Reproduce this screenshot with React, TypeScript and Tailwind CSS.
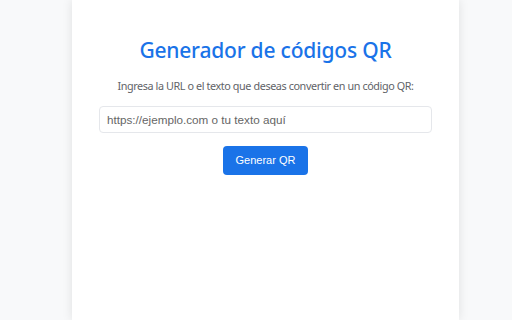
export default function App() {
  return (
    <div className="h-[320px] overflow-hidden bg-[#f8f9fa] flex">
      <div className="ml-[72px] w-[387px] h-full bg-white shadow-[0_0_10px_rgba(0,0,0,0.1)] px-[27px] pt-[35px] flex flex-col items-center font-['Noto_Sans',sans-serif]">
        <h1 className="text-[#1a73e8] text-[21px] leading-[30px] font-medium tracking-[-0.2px] whitespace-nowrap">
          Generador de códigos QR
        </h1>
        <p className="mt-[13px] text-[10.8px] leading-[16px] text-[#5f6368] whitespace-nowrap tracking-[-0.4px]">
          Ingresa la URL o el texto que deseas convertir en un código QR:
        </p>
        <input
          type="text"
          placeholder="https://ejemplo.com o tu texto aquí"
          className="mt-[12px] w-full h-[27px] border border-[#e5e7eb] rounded-[4px] px-[7px] text-[11.7px] placeholder:text-[#666] outline-none font-['Liberation_Sans',Arial,sans-serif]"
        />
        <button className="mt-[13px] w-[85px] h-[29px] bg-[#1a73e8] text-white rounded-[4px] text-[11px] font-['Liberation_Sans',Arial,sans-serif]">
          Generar QR
        </button>
      </div>
    </div>
  );
}
